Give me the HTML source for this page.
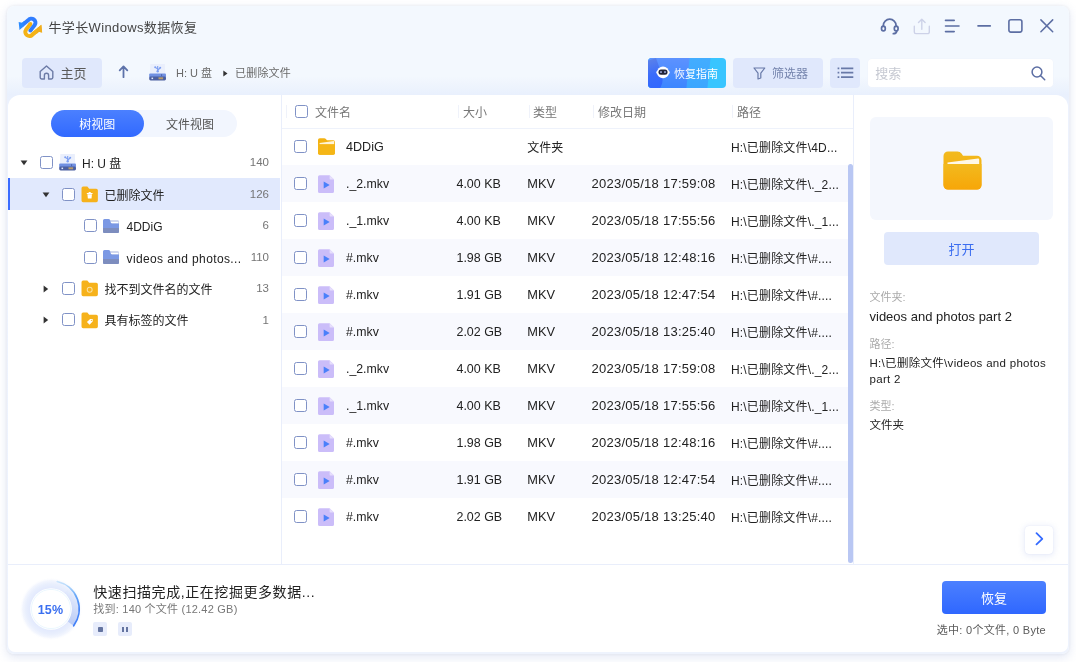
<!DOCTYPE html>
<html lang="zh-CN">
<head>
<meta charset="utf-8">
<title>牛学长Windows数据恢复</title>
<style>
*{box-sizing:border-box;margin:0;padding:0}
html,body{width:1076px;height:662px;overflow:hidden;background:#fff}
body{font-family:"Liberation Sans","Noto Sans CJK SC",sans-serif;font-size:13px;color:#222;position:relative}
.win *{position:absolute}
.win{will-change:transform;position:absolute;left:7px;top:6px;width:1062px;height:647.500px;border-radius:7px;background:linear-gradient(#f3f8fe 0,#f3f8fe 70px,#e9f0fd 89px,#edf2fd 100px,#eef3fd 100%);box-shadow:0 3px 10px 1px rgba(130,150,210,.20),0 0 3px rgba(120,125,140,.14)}
.sec{left:0;top:0;width:1062px;height:647.500px}
.t{white-space:nowrap}
svg{overflow:visible}
.panel{left:1px;top:88.700px;width:1060px;height:557.800px;background:#fff;border-radius:12px 12px 7px 7px}
.cb{width:13px;height:13px;border:1px solid #8092c6;border-radius:2.500px;background:#fff}
</style>
</head>
<body>
<div class="win">
  <!-- title bar -->
  <header class="sec">
    <svg style="left:10.5px;top:9.5px" width="25" height="23" viewBox="0 0 25 23">
  <g transform="translate(12.400 11.300) rotate(180)" stroke="#f4b316" fill="#f4b316"><path d="M-8.900 -1.650 L-2.300 -7 A4.070 4.070 0 0 1 4.310 -2.240 L-.03 3.290" fill="none" stroke-width="3.900" stroke-linecap="butt" stroke-linejoin="round"/><circle cx="-.03" cy="3.290" r="1.950" stroke="none"/><g fill="#efae1f"><path d="M-11.750 -5.300 L-8.200 -4.500 L-6.500 -6.200 L-7.150 -.64 L-10.900 2.660 Z" stroke="none"/></g></g>
  <g transform="translate(12.400 11.300)" stroke="#2f7dff" fill="#2f7dff"><path d="M-8.900 -1.650 L-2.300 -7 A4.070 4.070 0 0 1 4.310 -2.240 L-.03 3.290" fill="none" stroke-width="3.900" stroke-linecap="butt" stroke-linejoin="round"/><circle cx="-.03" cy="3.290" r="1.950" stroke="none"/><g fill="#2b8bff"><path d="M-11.750 -5.300 L-8.200 -4.500 L-6.500 -6.200 L-7.150 -.64 L-10.900 2.660 Z" stroke="none"/></g></g>
  <g transform="translate(12.400 11.300) rotate(180)" stroke="#f4b316" fill="#efae1f"><path d="M-8.900 -1.650 L-2.300 -7 A4.070 4.070 0 0 1 1.150 -8.790" fill="none" stroke-width="3.900"/><path d="M-11.750 -5.300 L-8.200 -4.500 L-6.500 -6.200 L-7.150 -.64 L-10.900 2.660 Z" stroke="none"/></g>
</svg>
    <div class="t" style="left:41.5px;top:13.0px;font-size:13px;line-height:18px;color:#444;letter-spacing:.36px;">牛学长Windows数据恢复</div>
    <svg style="left:873px;top:12px" width="20" height="17" viewBox="0 0 20 17" fill="none" stroke="#5c6ea3" stroke-width="1.700" stroke-linecap="round">
  <path d="M3.300 8.300 V7.600 A6.400 6.400 0 0 1 16.100 7.600 V8.300"/>
  <ellipse cx="3.400" cy="10.500" rx="1.900" ry="2.400"/>
  <ellipse cx="16.200" cy="10.500" rx="1.900" ry="2.400"/>
  <path d="M16.800 12.800 C16.600 14.900 15.200 15.700 13.300 15.700"/>
</svg>
    <svg style="left:906px;top:12px" width="18" height="17" viewBox="0 0 18 17" fill="none" stroke="#cdd2e8" stroke-width="1.400" stroke-linecap="round" stroke-linejoin="round">
  <path d="M1.300 8.200 V14 A1.600 1.600 0 0 0 2.900 15.600 H14.700 A1.600 1.600 0 0 0 16.300 14 V8.200"/>
  <path d="M8.800 11.200 V1.400 M5.500 4.600 L8.800 1.200 L12.100 4.600"/>
</svg>
    <svg style="left:937px;top:13px" width="16" height="14" viewBox="0 0 16 14" fill="none" stroke="#5c6ea3" stroke-width="1.600" stroke-linecap="round">
  <path d="M1.500 1.400 H10.200 M1.500 7 H15 M1.500 12.600 H10.200"/>
</svg>
    <svg style="left:970px;top:18px" width="14" height="4" viewBox="0 0 14 4" fill="none" stroke="#5c6ea3" stroke-width="1.600" stroke-linecap="round"><path d="M1 1.900 H13.300"/></svg>
    <svg style="left:1001px;top:13px" width="15" height="14" viewBox="0 0 15 14" fill="none" stroke="#5c6ea3" stroke-width="1.600"><rect x=".9" y=".8" width="13" height="12.300" rx="2"/></svg>
    <svg style="left:1033px;top:13px" width="14" height="14" viewBox="0 0 14 14" fill="none" stroke="#5c6ea3" stroke-width="1.500" stroke-linecap="round"><path d="M.9 .9 L12.700 12.700 M12.700 .9 L.9 12.700"/></svg>
  </header>
  <!-- toolbar -->
  <nav class="sec">
    <div style="left:15px;top:52px;width:79.500px;height:29.500px;background:#e0e8fc;border-radius:4px"></div>
    <svg style="left:32px;top:59px" width="15" height="15" viewBox="0 0 15 15" fill="none" stroke="#6c7ba6" stroke-width="1.400" stroke-linejoin="round" stroke-linecap="round">
  <path d="M1.200 6.600 L7.500 1 L13.800 6.600 V12.600 A1.400 1.400 0 0 1 12.400 14 H9.600 V10.400 A2.100 2.100 0 0 0 5.400 10.400 V14 H2.600 A1.400 1.400 0 0 1 1.200 12.600 Z"/>
</svg>
    <div class="t" style="left:53.5px;top:59.0px;font-size:13px;line-height:18px;color:#5a5a5a;">主页</div>
    <svg style="left:111px;top:59px" width="11" height="13" viewBox="0 0 11 13" fill="none" stroke="#5d72aa" stroke-width="1.800" stroke-linecap="round" stroke-linejoin="round">
  <path d="M5.500 12.200 V1.600 M1.700 5.400 L5.500 1.400 L9.300 5.400"/>
</svg>
    <svg style="left:141.6px;top:58px" width="17.200" height="16.500" viewBox="0 0 17.200 16.500"><path d="M1.400 0 H15.800 L16.400 9.700 H.8 Z" fill="#eaeffc"/>
  <path d="M8.700 2 V7 M8.700 5 L6.300 3.400 M8.700 6 L11 4.200" stroke="#7d9ff2" stroke-width="1.100" fill="none"/>
  <circle cx="6.200" cy="3.200" r="1" fill="#7d9ff2"/><circle cx="11.200" cy="3.800" r="1" fill="#7d9ff2"/><circle cx="8.700" cy="7.200" r="1.200" fill="#7d9ff2"/>
  <rect x=".2" y="9.600" width="16.800" height="3.800" rx="1" fill="#7090e2"/>
  <rect x=".2" y="12.400" width="16.800" height="4" rx="1.400" fill="#4b5fa0"/>
  <rect x="9.500" y="13.300" width="4.600" height="2" fill="#b59a6c"/>
  <rect x="2.500" y="13.600" width="1.600" height="1.500" fill="#e6ecfb"/>
  <rect x="12.200" y="10.200" width=".9" height="2" fill="#4b5fa0"/></svg>
    <div class="t" style="left:169px;top:59.0px;font-size:11px;line-height:16px;color:#6a6a6a;">H: U 盘</div>
    <svg style="left:215.5px;top:63.5px" width="5" height="7" viewBox="0 0 5 7"><path d="M.3 .4 L4.500 3.500 L.3 6.600Z" fill="#333"/></svg>
    <div class="t" style="left:228px;top:59.0px;font-size:11px;line-height:16px;color:#6a6a6a;letter-spacing:.2px;">已删除文件</div>
    <div style="left:641px;top:52px;width:77.500px;height:29.500px;border-radius:4px;overflow:hidden;background:#38c5ff">
    <div style="left:-10px;top:0;width:70.500px;height:30px;background:linear-gradient(#43adff,#3ba6ff);transform:skewX(-6deg)"></div>
    <div style="left:-10px;top:0;width:50px;height:30px;background:linear-gradient(#5d92ff,#3c86ff);transform:skewX(-6deg)"></div>
    <div style="left:-42.300px;top:0;width:50px;height:33px;transform-origin:100% 0;transform:rotate(-19.500deg);border-radius:0 0 16px 0;background:linear-gradient(#5a80ea,#3a6cfb 45%,#2f66ff)"></div>
  </div>
    <svg style="left:649px;top:60px" width="14" height="13" viewBox="0 0 14 13">
  <ellipse cx="7" cy="6.400" rx="6" ry="5.900" fill="#fff"/>
  <rect x=".3" y="4.600" width="13.400" height="3.600" rx="1.800" fill="#fff"/>
  <rect x="2.500" y="3.600" width="9" height="5.100" rx="2.500" fill="#23263a"/>
  <rect x="4" y="5.300" width="2" height="1.500" rx=".6" fill="#aab6e8"/>
  <rect x="8" y="5.300" width="2" height="1.500" rx=".6" fill="#aab6e8"/>
</svg>
    <div class="t" style="left:667px;top:60.0px;font-size:11px;line-height:16px;color:#fff;">恢复指南</div>
    <div style="left:726px;top:52px;width:89.500px;height:29.500px;background:#e0e8fc;border-radius:4px"></div>
    <svg style="left:746px;top:61px" width="13" height="13" viewBox="0 0 13 13" fill="none" stroke="#6879a8" stroke-width="1.200" stroke-linejoin="round">
  <path d="M1 1 H11.800 L7.800 6.200 V11 L5 12 V6.200 Z"/>
</svg>
    <div class="t" style="left:765px;top:59.0px;font-size:12px;line-height:18px;color:#7584ad;">筛选器</div>
    <div style="left:823px;top:52px;width:29.500px;height:29.500px;background:#e0e8fc;border-radius:4px"></div>
    <svg style="left:830px;top:60px" width="17" height="13" viewBox="0 0 17 13" fill="none" stroke="#6879a8" stroke-width="1.700">
  <path d="M4 2.300 H16.300 M4 6.700 H16.300 M4 11.100 H16.300"/>
  <path d="M.6 2.300 H2.300 M.6 6.700 H2.300 M.6 11.100 H2.300"/>
</svg>
    <div style="left:860.6px;top:52.7px;width:185.600px;height:28px;background:#fff;border-radius:4px;box-shadow:0 0 0 .5px #f0f3fb"></div>
    <div class="t" style="left:868.3px;top:59.0px;font-size:13px;line-height:18px;color:#c6c9d2;">搜索</div>
    <svg style="left:1024px;top:59.5px" width="15" height="15" viewBox="0 0 15 15" fill="none" stroke="#5c6ea3" stroke-width="1.500" stroke-linecap="round">
  <circle cx="6" cy="6" r="4.900"/><path d="M9.700 9.700 L13.700 13.700"/>
</svg>
  </nav>
  <!-- panel -->
  <section class="sec">
    <div class="panel"></div>
  </section>
  <!-- left tree -->
  <aside class="sec">
    <div style="left:44.4px;top:104.2px;width:186px;height:27px;border-radius:14px;background:#f2f6fe"></div>
    <div style="left:44.4px;top:104.2px;width:92.600px;height:27px;border-radius:14px;background:linear-gradient(#4b80ff,#3169ff)"></div>
    <div class="t" style="left:72.3px;top:109.5px;font-size:12px;line-height:18px;color:#fff;">树视图</div>
    <div class="t" style="left:159px;top:109.5px;font-size:12px;line-height:18px;color:#555;">文件视图</div>
    <div style="left:1px;top:172px;width:272px;height:31.800px;background:#e1e9fd"></div>
    <div style="left:1px;top:172px;width:2px;height:31.800px;background:#3b6cff"></div>
    <div style="left:273.6px;top:89px;width:1px;height:469px;background:#e9eefb"></div>
    <svg style="left:13px;top:154.2px" width="8" height="6" viewBox="0 0 8 6"><path d="M.6 .6 H7.400 L4 5.200Z" fill="#333"/></svg>
    <div class="cb" style="left:32.5px;top:150.2px"></div>
    <svg style="left:52.0px;top:148.2px" width="17.200" height="16.500" viewBox="0 0 17.200 16.500"><path d="M1.400 0 H15.800 L16.400 9.700 H.8 Z" fill="#eaeffc"/>
  <path d="M8.700 2 V7 M8.700 5 L6.300 3.400 M8.700 6 L11 4.200" stroke="#7d9ff2" stroke-width="1.100" fill="none"/>
  <circle cx="6.200" cy="3.200" r="1" fill="#7d9ff2"/><circle cx="11.200" cy="3.800" r="1" fill="#7d9ff2"/><circle cx="8.700" cy="7.200" r="1.200" fill="#7d9ff2"/>
  <rect x=".2" y="9.600" width="16.800" height="3.800" rx="1" fill="#7090e2"/>
  <rect x=".2" y="12.400" width="16.800" height="4" rx="1.400" fill="#4b5fa0"/>
  <rect x="9.500" y="13.300" width="4.600" height="2" fill="#b59a6c"/>
  <rect x="2.500" y="13.600" width="1.600" height="1.500" fill="#e6ecfb"/>
  <rect x="12.200" y="10.200" width=".9" height="2" fill="#4b5fa0"/></svg>
    <div class="t" style="left:75.0px;top:149.2px;font-size:12px;line-height:18px;color:#222;">H: U 盘</div>
    <div class="t" style="right:800px;top:147.3px;font-size:11.5px;line-height:18px;color:#757575;">140</div>
    <svg style="left:35px;top:185.65px" width="8" height="6" viewBox="0 0 8 6"><path d="M.6 .6 H7.400 L4 5.200Z" fill="#333"/></svg>
    <div class="cb" style="left:55px;top:181.65px"></div>
    <svg style="left:73.9px;top:179.95px" width="17.400" height="16.600" viewBox="0 0 17 16" preserveAspectRatio="none"><path d="M.5 2.200 A1.600 1.600 0 0 1 2.100 .6 H6.200 L8 2.600 H14.900 A1.600 1.600 0 0 1 16.500 4.200 V14 A1.600 1.600 0 0 1 14.900 15.600 H2.100 A1.600 1.600 0 0 1 .5 14 Z" fill="#f6b21b"/><path d="M5.700 7.300 H11.300 M7.500 6.300 H9.500" stroke="#fff" stroke-width="1" fill="none"/><path d="M6.300 8 H10.700 L10.300 12 H6.700 Z" fill="#fff"/></svg>
    <div class="t" style="left:97.5px;top:180.65px;font-size:12px;line-height:18px;color:#222;">已删除文件</div>
    <div class="t" style="right:800px;top:178.75px;font-size:11.5px;line-height:18px;color:#757575;">126</div>
    <div class="cb" style="left:77px;top:213.1px"></div>
    <svg style="left:96.2px;top:212.7px" width="16" height="14" viewBox="0 0 16 14">
    <path d="M0 1.600 A1.500 1.500 0 0 1 1.500 .1 H5.600 Q6.400 .1 6.800 .8 L7.600 2.300 H7.400 V4.400 H16 V12.500 A1.500 1.500 0 0 1 14.500 14 H1.500 A1.500 1.500 0 0 1 0 12.500 Z" fill="#7b98e4"/>
    <path d="M7 1.300 H14.600 A1.400 1.400 0 0 1 16 2.700 V5 H7 Z" fill="#c3cbe8"/>
    <path d="M7.600 2.700 H15.300 V4.500 H8.500 Q7.700 4.300 7.600 2.700 Z" fill="#fff"/>
    <path d="M6.300 .5 Q7.400 1 7.500 3 Q7.700 4.400 9 4.400 H16 V9.200 H0 V4 Z" fill="#7b98e4"/>
    <path d="M0 9.100 H16 V12.500 A1.500 1.500 0 0 1 14.500 14 H1.500 A1.500 1.500 0 0 1 0 12.500 Z" fill="#7d8dbe"/></svg>
    <div class="t" style="left:119.5px;top:212.1px;font-size:12px;line-height:18px;color:#222;">4DDiG</div>
    <div class="t" style="right:800px;top:210.2px;font-size:11.5px;line-height:18px;color:#757575;">6</div>
    <div class="cb" style="left:77px;top:244.55px"></div>
    <svg style="left:96.2px;top:244.15px" width="16" height="14" viewBox="0 0 16 14">
    <path d="M0 1.600 A1.500 1.500 0 0 1 1.500 .1 H5.600 Q6.400 .1 6.800 .8 L7.600 2.300 H7.400 V4.400 H16 V12.500 A1.500 1.500 0 0 1 14.500 14 H1.500 A1.500 1.500 0 0 1 0 12.500 Z" fill="#7b98e4"/>
    <path d="M7 1.300 H14.600 A1.400 1.400 0 0 1 16 2.700 V5 H7 Z" fill="#c3cbe8"/>
    <path d="M7.600 2.700 H15.300 V4.500 H8.500 Q7.700 4.300 7.600 2.700 Z" fill="#fff"/>
    <path d="M6.300 .5 Q7.400 1 7.500 3 Q7.700 4.400 9 4.400 H16 V9.200 H0 V4 Z" fill="#7b98e4"/>
    <path d="M0 9.100 H16 V12.500 A1.500 1.500 0 0 1 14.500 14 H1.500 A1.500 1.500 0 0 1 0 12.500 Z" fill="#7d8dbe"/></svg>
    <div class="t" style="left:119.5px;top:243.55px;font-size:12px;line-height:18px;color:#222;letter-spacing:.38px;">videos and photos...</div>
    <div class="t" style="right:800px;top:241.65px;font-size:11.5px;line-height:18px;color:#757575;">110</div>
    <svg style="left:36px;top:278.5px" width="6" height="8" viewBox="0 0 6 8"><path d="M.6 .6 V7.400 L5.200 4Z" fill="#333"/></svg>
    <div class="cb" style="left:55px;top:276.0px"></div>
    <svg style="left:73.9px;top:274.3px" width="17.400" height="16.600" viewBox="0 0 17 16" preserveAspectRatio="none"><path d="M.5 2.200 A1.600 1.600 0 0 1 2.100 .6 H6.200 L8 2.600 H14.900 A1.600 1.600 0 0 1 16.500 4.200 V14 A1.600 1.600 0 0 1 14.900 15.600 H2.100 A1.600 1.600 0 0 1 .5 14 Z" fill="#f6b21b"/><circle cx="8.500" cy="9.400" r="2.400" stroke="#fbe0a0" stroke-width="1" fill="none"/></svg>
    <div class="t" style="left:97.5px;top:275.0px;font-size:12px;line-height:18px;color:#222;">找不到文件名的文件</div>
    <div class="t" style="right:800px;top:273.1px;font-size:11.5px;line-height:18px;color:#757575;">13</div>
    <svg style="left:36px;top:309.95px" width="6" height="8" viewBox="0 0 6 8"><path d="M.6 .6 V7.400 L5.200 4Z" fill="#333"/></svg>
    <div class="cb" style="left:55px;top:307.45px"></div>
    <svg style="left:73.9px;top:305.75px" width="17.400" height="16.600" viewBox="0 0 17 16" preserveAspectRatio="none"><path d="M.5 2.200 A1.600 1.600 0 0 1 2.100 .6 H6.200 L8 2.600 H14.900 A1.600 1.600 0 0 1 16.500 4.200 V14 A1.600 1.600 0 0 1 14.900 15.600 H2.100 A1.600 1.600 0 0 1 .5 14 Z" fill="#f6b21b"/><path d="M5.800 9.700 L8.900 6.800 H11.400 V9.200 L8.300 12.200 Z" fill="#fff"/><circle cx="10.200" cy="8" r=".6" fill="#f6b21b"/></svg>
    <div class="t" style="left:97.5px;top:306.45px;font-size:12px;line-height:18px;color:#222;">具有标签的文件</div>
    <div class="t" style="right:800px;top:304.55px;font-size:11.5px;line-height:18px;color:#757575;">1</div>
  </aside>
  <!-- file list -->
  <main class="sec">
    <div style="left:275px;top:121.5px;width:571px;height:1px;background:#eef2fb"></div>
    <div class="cb" style="left:287.5px;top:99px"></div>
    <div style="left:278.5px;top:99px;width:1px;height:13px;background:#eff2fa"></div>
    <div style="left:451px;top:99px;width:1px;height:13px;background:#eff2fa"></div>
    <div style="left:521.5px;top:99px;width:1px;height:13px;background:#eff2fa"></div>
    <div style="left:586px;top:99px;width:1px;height:13px;background:#eff2fa"></div>
    <div style="left:724.5px;top:99px;width:1px;height:13px;background:#eff2fa"></div>
    <div class="t" style="left:308px;top:98.0px;font-size:12px;line-height:18px;color:#777;">文件名</div>
    <div class="t" style="left:456px;top:98.0px;font-size:12px;line-height:18px;color:#777;">大小</div>
    <div class="t" style="left:526px;top:98.0px;font-size:12px;line-height:18px;color:#777;">类型</div>
    <div class="t" style="left:591px;top:98.0px;font-size:12px;line-height:18px;color:#777;">修改日期</div>
    <div class="t" style="left:730px;top:98.0px;font-size:12px;line-height:18px;color:#777;">路径</div>
    <div class="cb" style="left:287px;top:134.1px"></div>
    <svg style="left:310.8px;top:132.2px" width="17" height="16.800" viewBox="0 0 17 16.800">
    <path d="M0 2 A1.800 1.800 0 0 1 1.800 .2 H6.200 Q7.200 .2 7.900 1 L9 2.300 H15.200 A1.800 1.800 0 0 1 17 4.100 V15 A1.800 1.800 0 0 1 15.200 16.800 H1.800 A1.800 1.800 0 0 1 0 15 Z" fill="#f3b212"/>
    <path d="M1.600 4.900 L15.600 3 Q16.200 3 16.200 3.600 V6.400 H1.600 Z" fill="#fff4d6"/>
    <path d="M0 6.200 H17 V15 A1.800 1.800 0 0 1 15.200 16.800 H1.800 A1.800 1.800 0 0 1 0 15 Z" fill="#f5b616"/></svg>
    <div class="t" style="left:339px;top:132.4px;font-size:12.6px;line-height:18px;color:#222;">4DDiG</div>
    <div class="t" style="left:520.3px;top:133.1px;font-size:12px;line-height:18px;color:#222;">文件夹</div>
    <div class="t" style="left:724px;top:132.8px;font-size:12px;line-height:18px;color:#222;letter-spacing:.17px;">H:\已删除文件\4D...</div>
    <div style="left:275px;top:159.1px;width:565.500px;height:37px;background:#f8f9fe"></div>
    <div class="cb" style="left:287px;top:171.1px"></div>
    <svg style="left:311px;top:168.6px" width="16" height="18" viewBox="0 0 16 18">
    <path d="M0 1.800 A1.600 1.600 0 0 1 1.600 .2 H11.600 L16 4.600 V16.400 A1.600 1.600 0 0 1 14.400 18 H1.600 A1.600 1.600 0 0 1 0 16.400 Z" fill="#cbbdf9"/>
    <path d="M11.600 .2 L16 4.600 H12.800 A1.200 1.200 0 0 1 11.600 3.400 Z" fill="#e6defc"/>
    <path d="M5.700 6.600 V13.400 L11.700 10 Z" fill="#4a80fa"/></svg>
    <div class="t" style="left:339px;top:169.4px;font-size:12.3px;line-height:18px;color:#222;">._2.mkv</div>
    <div class="t" style="left:449.5px;top:169.4px;font-size:12.45px;line-height:18px;color:#222;">4.00 KB</div>
    <div class="t" style="left:520.3px;top:169.4px;font-size:12.8px;line-height:18px;color:#222;">MKV</div>
    <div class="t" style="left:584.5px;top:169.4px;font-size:13px;line-height:18px;color:#222;letter-spacing:.25px;">2023/05/18 17:59:08</div>
    <div class="t" style="left:724px;top:169.8px;font-size:12px;line-height:18px;color:#222;letter-spacing:.17px;">H:\已删除文件\._2...</div>
    <div class="cb" style="left:287px;top:208.1px"></div>
    <svg style="left:311px;top:205.6px" width="16" height="18" viewBox="0 0 16 18">
    <path d="M0 1.800 A1.600 1.600 0 0 1 1.600 .2 H11.600 L16 4.600 V16.400 A1.600 1.600 0 0 1 14.400 18 H1.600 A1.600 1.600 0 0 1 0 16.400 Z" fill="#cbbdf9"/>
    <path d="M11.600 .2 L16 4.600 H12.800 A1.200 1.200 0 0 1 11.600 3.400 Z" fill="#e6defc"/>
    <path d="M5.700 6.600 V13.400 L11.700 10 Z" fill="#4a80fa"/></svg>
    <div class="t" style="left:339px;top:206.4px;font-size:12.3px;line-height:18px;color:#222;">._1.mkv</div>
    <div class="t" style="left:449.5px;top:206.4px;font-size:12.45px;line-height:18px;color:#222;">4.00 KB</div>
    <div class="t" style="left:520.3px;top:206.4px;font-size:12.8px;line-height:18px;color:#222;">MKV</div>
    <div class="t" style="left:584.5px;top:206.4px;font-size:13px;line-height:18px;color:#222;letter-spacing:.25px;">2023/05/18 17:55:56</div>
    <div class="t" style="left:724px;top:206.8px;font-size:12px;line-height:18px;color:#222;letter-spacing:.17px;">H:\已删除文件\._1...</div>
    <div style="left:275px;top:233.1px;width:565.500px;height:37px;background:#f8f9fe"></div>
    <div class="cb" style="left:287px;top:245.1px"></div>
    <svg style="left:311px;top:242.6px" width="16" height="18" viewBox="0 0 16 18">
    <path d="M0 1.800 A1.600 1.600 0 0 1 1.600 .2 H11.600 L16 4.600 V16.400 A1.600 1.600 0 0 1 14.400 18 H1.600 A1.600 1.600 0 0 1 0 16.400 Z" fill="#cbbdf9"/>
    <path d="M11.600 .2 L16 4.600 H12.800 A1.200 1.200 0 0 1 11.600 3.400 Z" fill="#e6defc"/>
    <path d="M5.700 6.600 V13.400 L11.700 10 Z" fill="#4a80fa"/></svg>
    <div class="t" style="left:339px;top:243.4px;font-size:12.3px;line-height:18px;color:#222;">#.mkv</div>
    <div class="t" style="left:449.5px;top:243.4px;font-size:12.45px;line-height:18px;color:#222;">1.98 GB</div>
    <div class="t" style="left:520.3px;top:243.4px;font-size:12.8px;line-height:18px;color:#222;">MKV</div>
    <div class="t" style="left:584.5px;top:243.4px;font-size:13px;line-height:18px;color:#222;letter-spacing:.25px;">2023/05/18 12:48:16</div>
    <div class="t" style="left:724px;top:243.8px;font-size:12px;line-height:18px;color:#222;letter-spacing:.17px;">H:\已删除文件\#....</div>
    <div class="cb" style="left:287px;top:282.1px"></div>
    <svg style="left:311px;top:279.6px" width="16" height="18" viewBox="0 0 16 18">
    <path d="M0 1.800 A1.600 1.600 0 0 1 1.600 .2 H11.600 L16 4.600 V16.400 A1.600 1.600 0 0 1 14.400 18 H1.600 A1.600 1.600 0 0 1 0 16.400 Z" fill="#cbbdf9"/>
    <path d="M11.600 .2 L16 4.600 H12.800 A1.200 1.200 0 0 1 11.600 3.400 Z" fill="#e6defc"/>
    <path d="M5.700 6.600 V13.400 L11.700 10 Z" fill="#4a80fa"/></svg>
    <div class="t" style="left:339px;top:280.4px;font-size:12.3px;line-height:18px;color:#222;">#.mkv</div>
    <div class="t" style="left:449.5px;top:280.4px;font-size:12.45px;line-height:18px;color:#222;">1.91 GB</div>
    <div class="t" style="left:520.3px;top:280.4px;font-size:12.8px;line-height:18px;color:#222;">MKV</div>
    <div class="t" style="left:584.5px;top:280.4px;font-size:13px;line-height:18px;color:#222;letter-spacing:.25px;">2023/05/18 12:47:54</div>
    <div class="t" style="left:724px;top:280.8px;font-size:12px;line-height:18px;color:#222;letter-spacing:.17px;">H:\已删除文件\#....</div>
    <div style="left:275px;top:307.1px;width:565.500px;height:37px;background:#f8f9fe"></div>
    <div class="cb" style="left:287px;top:319.1px"></div>
    <svg style="left:311px;top:316.6px" width="16" height="18" viewBox="0 0 16 18">
    <path d="M0 1.800 A1.600 1.600 0 0 1 1.600 .2 H11.600 L16 4.600 V16.400 A1.600 1.600 0 0 1 14.400 18 H1.600 A1.600 1.600 0 0 1 0 16.400 Z" fill="#cbbdf9"/>
    <path d="M11.600 .2 L16 4.600 H12.800 A1.200 1.200 0 0 1 11.600 3.400 Z" fill="#e6defc"/>
    <path d="M5.700 6.600 V13.400 L11.700 10 Z" fill="#4a80fa"/></svg>
    <div class="t" style="left:339px;top:317.4px;font-size:12.3px;line-height:18px;color:#222;">#.mkv</div>
    <div class="t" style="left:449.5px;top:317.4px;font-size:12.45px;line-height:18px;color:#222;">2.02 GB</div>
    <div class="t" style="left:520.3px;top:317.4px;font-size:12.8px;line-height:18px;color:#222;">MKV</div>
    <div class="t" style="left:584.5px;top:317.4px;font-size:13px;line-height:18px;color:#222;letter-spacing:.25px;">2023/05/18 13:25:40</div>
    <div class="t" style="left:724px;top:317.8px;font-size:12px;line-height:18px;color:#222;letter-spacing:.17px;">H:\已删除文件\#....</div>
    <div class="cb" style="left:287px;top:356.1px"></div>
    <svg style="left:311px;top:353.6px" width="16" height="18" viewBox="0 0 16 18">
    <path d="M0 1.800 A1.600 1.600 0 0 1 1.600 .2 H11.600 L16 4.600 V16.400 A1.600 1.600 0 0 1 14.400 18 H1.600 A1.600 1.600 0 0 1 0 16.400 Z" fill="#cbbdf9"/>
    <path d="M11.600 .2 L16 4.600 H12.800 A1.200 1.200 0 0 1 11.600 3.400 Z" fill="#e6defc"/>
    <path d="M5.700 6.600 V13.400 L11.700 10 Z" fill="#4a80fa"/></svg>
    <div class="t" style="left:339px;top:354.4px;font-size:12.3px;line-height:18px;color:#222;">._2.mkv</div>
    <div class="t" style="left:449.5px;top:354.4px;font-size:12.45px;line-height:18px;color:#222;">4.00 KB</div>
    <div class="t" style="left:520.3px;top:354.4px;font-size:12.8px;line-height:18px;color:#222;">MKV</div>
    <div class="t" style="left:584.5px;top:354.4px;font-size:13px;line-height:18px;color:#222;letter-spacing:.25px;">2023/05/18 17:59:08</div>
    <div class="t" style="left:724px;top:354.8px;font-size:12px;line-height:18px;color:#222;letter-spacing:.17px;">H:\已删除文件\._2...</div>
    <div style="left:275px;top:381.1px;width:565.500px;height:37px;background:#f8f9fe"></div>
    <div class="cb" style="left:287px;top:393.1px"></div>
    <svg style="left:311px;top:390.6px" width="16" height="18" viewBox="0 0 16 18">
    <path d="M0 1.800 A1.600 1.600 0 0 1 1.600 .2 H11.600 L16 4.600 V16.400 A1.600 1.600 0 0 1 14.400 18 H1.600 A1.600 1.600 0 0 1 0 16.400 Z" fill="#cbbdf9"/>
    <path d="M11.600 .2 L16 4.600 H12.800 A1.200 1.200 0 0 1 11.600 3.400 Z" fill="#e6defc"/>
    <path d="M5.700 6.600 V13.400 L11.700 10 Z" fill="#4a80fa"/></svg>
    <div class="t" style="left:339px;top:391.4px;font-size:12.3px;line-height:18px;color:#222;">._1.mkv</div>
    <div class="t" style="left:449.5px;top:391.4px;font-size:12.45px;line-height:18px;color:#222;">4.00 KB</div>
    <div class="t" style="left:520.3px;top:391.4px;font-size:12.8px;line-height:18px;color:#222;">MKV</div>
    <div class="t" style="left:584.5px;top:391.4px;font-size:13px;line-height:18px;color:#222;letter-spacing:.25px;">2023/05/18 17:55:56</div>
    <div class="t" style="left:724px;top:391.8px;font-size:12px;line-height:18px;color:#222;letter-spacing:.17px;">H:\已删除文件\._1...</div>
    <div class="cb" style="left:287px;top:430.1px"></div>
    <svg style="left:311px;top:427.6px" width="16" height="18" viewBox="0 0 16 18">
    <path d="M0 1.800 A1.600 1.600 0 0 1 1.600 .2 H11.600 L16 4.600 V16.400 A1.600 1.600 0 0 1 14.400 18 H1.600 A1.600 1.600 0 0 1 0 16.400 Z" fill="#cbbdf9"/>
    <path d="M11.600 .2 L16 4.600 H12.800 A1.200 1.200 0 0 1 11.600 3.400 Z" fill="#e6defc"/>
    <path d="M5.700 6.600 V13.400 L11.700 10 Z" fill="#4a80fa"/></svg>
    <div class="t" style="left:339px;top:428.4px;font-size:12.3px;line-height:18px;color:#222;">#.mkv</div>
    <div class="t" style="left:449.5px;top:428.4px;font-size:12.45px;line-height:18px;color:#222;">1.98 GB</div>
    <div class="t" style="left:520.3px;top:428.4px;font-size:12.8px;line-height:18px;color:#222;">MKV</div>
    <div class="t" style="left:584.5px;top:428.4px;font-size:13px;line-height:18px;color:#222;letter-spacing:.25px;">2023/05/18 12:48:16</div>
    <div class="t" style="left:724px;top:428.8px;font-size:12px;line-height:18px;color:#222;letter-spacing:.17px;">H:\已删除文件\#....</div>
    <div style="left:275px;top:455.1px;width:565.500px;height:37px;background:#f8f9fe"></div>
    <div class="cb" style="left:287px;top:467.1px"></div>
    <svg style="left:311px;top:464.6px" width="16" height="18" viewBox="0 0 16 18">
    <path d="M0 1.800 A1.600 1.600 0 0 1 1.600 .2 H11.600 L16 4.600 V16.400 A1.600 1.600 0 0 1 14.400 18 H1.600 A1.600 1.600 0 0 1 0 16.400 Z" fill="#cbbdf9"/>
    <path d="M11.600 .2 L16 4.600 H12.800 A1.200 1.200 0 0 1 11.600 3.400 Z" fill="#e6defc"/>
    <path d="M5.700 6.600 V13.400 L11.700 10 Z" fill="#4a80fa"/></svg>
    <div class="t" style="left:339px;top:465.4px;font-size:12.3px;line-height:18px;color:#222;">#.mkv</div>
    <div class="t" style="left:449.5px;top:465.4px;font-size:12.45px;line-height:18px;color:#222;">1.91 GB</div>
    <div class="t" style="left:520.3px;top:465.4px;font-size:12.8px;line-height:18px;color:#222;">MKV</div>
    <div class="t" style="left:584.5px;top:465.4px;font-size:13px;line-height:18px;color:#222;letter-spacing:.25px;">2023/05/18 12:47:54</div>
    <div class="t" style="left:724px;top:465.8px;font-size:12px;line-height:18px;color:#222;letter-spacing:.17px;">H:\已删除文件\#....</div>
    <div class="cb" style="left:287px;top:504.1px"></div>
    <svg style="left:311px;top:501.6px" width="16" height="18" viewBox="0 0 16 18">
    <path d="M0 1.800 A1.600 1.600 0 0 1 1.600 .2 H11.600 L16 4.600 V16.400 A1.600 1.600 0 0 1 14.400 18 H1.600 A1.600 1.600 0 0 1 0 16.400 Z" fill="#cbbdf9"/>
    <path d="M11.600 .2 L16 4.600 H12.800 A1.200 1.200 0 0 1 11.600 3.400 Z" fill="#e6defc"/>
    <path d="M5.700 6.600 V13.400 L11.700 10 Z" fill="#4a80fa"/></svg>
    <div class="t" style="left:339px;top:502.4px;font-size:12.3px;line-height:18px;color:#222;">#.mkv</div>
    <div class="t" style="left:449.5px;top:502.4px;font-size:12.45px;line-height:18px;color:#222;">2.02 GB</div>
    <div class="t" style="left:520.3px;top:502.4px;font-size:12.8px;line-height:18px;color:#222;">MKV</div>
    <div class="t" style="left:584.5px;top:502.4px;font-size:13px;line-height:18px;color:#222;letter-spacing:.25px;">2023/05/18 13:25:40</div>
    <div class="t" style="left:724px;top:502.8px;font-size:12px;line-height:18px;color:#222;letter-spacing:.17px;">H:\已删除文件\#....</div>
    <div style="left:841px;top:158.2px;width:5.400px;height:399.200px;border-radius:3px;background:#b9c7f3"></div>
    <div style="left:846px;top:89px;width:1px;height:469px;background:#e9eefb"></div>
  </main>
  <!-- preview -->
  <aside class="sec">
    <div style="left:862.5px;top:110.5px;width:183.300px;height:103.500px;border-radius:6px;background:#f4f7fd"></div>
    <svg style="left:936px;top:144.5px" width="39" height="39" viewBox="0 0 39 39">
  <defs><linearGradient id="fg" x1="0" y1="0" x2="0" y2="1"><stop offset="0" stop-color="#f2ba1e"/><stop offset="1" stop-color="#f7a608"/></linearGradient></defs>
  <path d="M.5 5 A4.500 4.500 0 0 1 5 .5 H14.500 Q17 .5 18.500 2.600 L20 4.800 H34 A4.500 4.500 0 0 1 38.500 9.300 V34 A4.500 4.500 0 0 1 34 38.500 H5 A4.500 4.500 0 0 1 .5 34 Z" fill="url(#fg)"/>
  <path d="M4.500 11.500 L35 7.600 Q36.200 7.500 36.200 8.800 V13 H4.500 Z" fill="#fff8e6"/>
  <path d="M.5 13 H38.500 V34 A4.500 4.500 0 0 1 34 38.500 H5 A4.500 4.500 0 0 1 .5 34 Z" fill="url(#fg)"/></svg>
    <div style="left:877px;top:226px;width:155px;height:33px;border-radius:4px;background:#e0e8fc"></div>
    <div class="t" style="left:877px;top:235.0px;font-size:13px;line-height:18px;color:#3b6df0;width:155px;text-align:center;">打开</div>
    <div class="t" style="left:862.5px;top:282.5px;font-size:11px;line-height:16px;color:#aaa;">文件夹:</div>
    <div class="t" style="left:862.5px;top:302.0px;font-size:13px;line-height:18px;color:#222;">videos and photos part 2</div>
    <div class="t" style="left:862.5px;top:330.0px;font-size:11px;line-height:16px;color:#aaa;">路径:</div>
    <div class="t" style="left:862.5px;top:348.8px;font-size:11.5px;line-height:16px;color:#222;letter-spacing:.3px;">H:\已删除文件\videos and photos</div>
    <div class="t" style="left:862.5px;top:364.7px;font-size:11.5px;line-height:16px;color:#222;letter-spacing:.3px;">part 2</div>
    <div class="t" style="left:862.5px;top:392.2px;font-size:11px;line-height:16px;color:#aaa;">类型:</div>
    <div class="t" style="left:862.5px;top:411.3px;font-size:11.5px;line-height:16px;color:#222;">文件夹</div>
    <div style="left:1017.8px;top:519.6px;width:28.500px;height:28.700px;border-radius:4px;background:#fff;box-shadow:0 1px 6px 1px rgba(140,160,225,.2),0 0 1px rgba(140,160,225,.3)"></div>
    <svg style="left:1027.6px;top:526.4px" width="9" height="13.600" viewBox="0 0 9 13.600" fill="none" stroke="#356bff" stroke-width="1.800" stroke-linecap="round" stroke-linejoin="round"><path d="M1.500 1.200 L7.300 6.800 L1.500 12.400"/></svg>
  </aside>
  <!-- footer -->
  <footer class="sec">
    <div style="left:1px;top:557.5px;width:1060px;height:1px;background:#e9eefb"></div>
    <svg style="left:11.9px;top:571.3px" width="64" height="64" viewBox="0 0 64 64">
  <defs><radialGradient id="rg" cx=".5" cy=".5" r=".5"><stop offset="0.62" stop-color="#fff"/><stop offset="0.655" stop-color="#e2e9fd"/><stop offset="0.80" stop-color="#e9effd"/><stop offset="0.90" stop-color="#f3f6fe"/><stop offset="1" stop-color="#fff" stop-opacity="0"/></radialGradient>
  <linearGradient id="ag" x1="0" y1="0" x2="0" y2="1"><stop offset="0" stop-color="#9fd2fb" stop-opacity=".5"/><stop offset=".3" stop-color="#6aaaf8"/><stop offset=".6" stop-color="#4585f7"/><stop offset="1" stop-color="#3f7ff8"/></linearGradient>
  <linearGradient id="ag2" x1="0" y1="0" x2="0" y2="1"><stop offset="0" stop-color="#c5d4f8" stop-opacity="0"/><stop offset="1" stop-color="#b4c7f5" stop-opacity=".95"/></linearGradient></defs>
  <circle cx="32" cy="32" r="31.500" fill="url(#rg)"/>
  <path d="M50.26 10.24 A28.400 28.400 0 0 1 54.83 48.89 L48.48 44.19 A20.500 20.500 0 0 0 45.18 16.3 Z" fill="url(#ag2)"/>
  <path d="M38.34 4.52 A28.200 28.200 0 0 1 54.67 48.77" fill="none" stroke="url(#ag)" stroke-width="1.700" stroke-linecap="round"/>
  <circle cx="32" cy="32" r="20.800" fill="#fff"/>
  <circle cx="32" cy="32" r="19.600" fill="none" stroke="#e3f3fd" stroke-width=".7"/>
</svg>
    <div class="t" style="left:23.5px;top:594.8px;font-size:12.5px;line-height:18px;color:#3a6ff0;width:40px;text-align:center;font-weight:bold;letter-spacing:.2px;">15%</div>
    <div class="t" style="left:86.3px;top:576.1px;font-size:14px;line-height:20px;color:#222;letter-spacing:.57px;">快速扫描完成,正在挖掘更多数据...</div>
    <div class="t" style="left:86.3px;top:595.4px;font-size:11px;line-height:16px;color:#777;letter-spacing:.22px;">找到: 140 个文件 (12.42 GB)</div>
    <div style="left:86.3px;top:616.4px;width:14px;height:14px;border-radius:2px;background:#e7ecfb"></div>
    <div style="left:91px;top:621px;width:4.800px;height:4.800px;border-radius:.8px;background:#6474a0"></div>
    <div style="left:110.8px;top:616.4px;width:14px;height:14px;border-radius:2px;background:#e7ecfb"></div>
    <div style="left:115px;top:620.6px;width:1.500px;height:5.800px;background:#6474a0"></div>
    <div style="left:119px;top:620.6px;width:1.500px;height:5.800px;background:#6474a0"></div>
    <div style="left:935px;top:575px;width:104px;height:33px;border-radius:4px;background:linear-gradient(#4c80ff,#2f67ff)"></div>
    <div class="t" style="left:935px;top:583.7px;font-size:13px;line-height:18px;color:#fff;width:104px;text-align:center;">恢复</div>
    <div class="t" style="right:23px;top:615.7px;font-size:11px;line-height:16px;color:#5a5a5a;letter-spacing:.3px;">选中: 0个文件, 0 Byte</div>
  </footer>
</div>
</body>
</html>
